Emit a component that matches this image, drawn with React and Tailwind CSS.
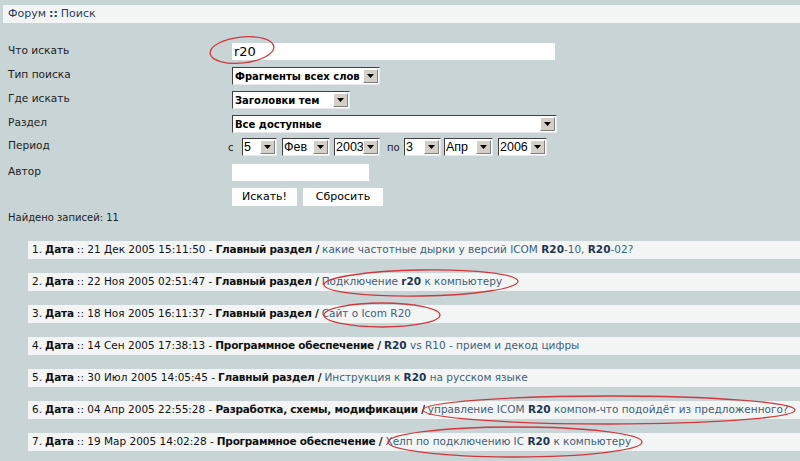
import React from "react";

const F = { fontFamily: '"DejaVu Sans", Verdana, sans-serif' };

function Select({ w, value, bold = true }) {
  return (
    <div
      className={`flex h-[18px] items-stretch bg-white border border-t-[#404040] border-l-[#404040] border-b-[#e8e8e8] border-r-[#e8e8e8] ${w}`}
    >
      <div
        className={`flex-1 flex items-center pl-[1px] text-black whitespace-nowrap overflow-hidden ${bold ? "text-[10px] font-bold pl-[2px]" : "text-[12.5px]"}`}
        style={bold ? F : { fontFamily: '"Liberation Sans", Arial, sans-serif' }}
      >
        {value}
      </div>
      <div className="w-[15px] my-[1px] mr-[1px] bg-[#d4d0c8] border border-t-white border-l-white border-b-[#808080] border-r-[#808080] flex items-center justify-center">
        <svg width="7" height="4" viewBox="0 0 7 4"><path d="M0 0H7L3.5 4Z" fill="#000" /></svg>
      </div>
    </div>
  );
}

function Label({ children }) {
  return <div className="w-[232px] pl-2 text-[10.6px] text-[#222]">{children}</div>;
}

const B = ({ children }) => <b className="text-[#1d3550]">{children}</b>;

const rows = [
  ["1", "21 Дек 2005 15:11:50", "Главный раздел", ["какие частотные дырки у версий ICOM ", <B key="a">R20</B>, "-10, ", <B key="b">R20</B>, "-02?"]],
  ["2", "22 Ноя 2005 02:51:47", "Главный раздел", ["Подключение ", <B key="a">r20</B>, " к компьютеру"]],
  ["3", "18 Ноя 2005 16:11:37", "Главный раздел", ["Сайт о Icom R20"]],
  ["4", "14 Сен 2005 17:38:13", "Программное обеспечение", [<B key="a">R20</B>, " vs R10 - прием и декод цифры"]],
  ["5", "30 Июл 2005 14:05:45", "Главный раздел", ["Инструкция к ", <B key="a">R20</B>, " на русском языке"]],
  ["6", "04 Апр 2005 22:55:28", "Разработка, схемы, модификации", ["управление ICOM ", <B key="a">R20</B>, " компом-что подойдёт из предложенного?"]],
  ["7", "19 Мар 2005 14:02:28", "Программное обеспечение", ["Хелп по подключению IC ", <B key="a">R20</B>, " к компьютеру"]],
];

export default function App() {
  return (
    <div className="relative w-[800px] h-[461px] overflow-hidden bg-[#c9d4d7]" style={F}>
      <div className="pt-[5px] pl-[3px]">
        <div className="h-[18px] bg-[#f3f5f5] flex items-center pl-[5px] text-[11px] text-[#1d3f63]">
          Форум <span className="mx-[3px] font-bold">::</span> Поиск
        </div>
      </div>

      <div className="mt-[20px] flex flex-col">
        <div className="flex h-[17px]">
          <Label>Что искать</Label>
          <div className="w-[323px] h-[17px] bg-white flex items-center pl-[2px] text-[13px] text-black" style={{ fontFamily: '"DejaVu Sans", sans-serif' }}>
            r20
          </div>
        </div>
        <div className="flex mt-[7px]">
          <Label>Тип поиска</Label>
          <Select w="w-[148px]" value="Фрагменты всех слов" />
        </div>
        <div className="flex mt-[6px]">
          <Label>Где искать</Label>
          <Select w="w-[118px]" value="Заголовки тем" />
        </div>
        <div className="flex mt-[6px]">
          <Label>Раздел</Label>
          <Select w="w-[325px]" value="Все доступные" />
        </div>
        <div className="flex mt-[5px]">
          <div className="w-[228px] pl-2 text-[10.6px] text-[#222]">Период</div>
          <div className="flex items-end text-[10px] text-[#222]">
            <span className="w-[14px] pb-[1px]">с</span>
            <Select w="w-[35px]" value="5" bold={false} />
            <div className="w-[5px]" />
            <Select w="w-[48px]" value="Фев" bold={false} />
            <div className="w-[4px]" />
            <Select w="w-[46px]" value="2003" bold={false} />
            <span className="ml-[7px] w-[17px] pb-[1px]">по</span>
            <Select w="w-[37px]" value="3" bold={false} />
            <div className="w-[3px]" />
            <Select w="w-[49px]" value="Апр" bold={false} />
            <div className="w-[5px]" />
            <Select w="w-[49px]" value="2006" bold={false} />
          </div>
        </div>
        <div className="flex mt-[8px]">
          <Label>Автор</Label>
          <div className="w-[137px] h-[17px] bg-white" />
        </div>
        <div className="flex mt-[7px]">
          <div className="w-[232px]" />
          <div className="flex gap-[6px]">
            <div className="w-[65px] h-[18px] bg-[#fdfdfd] flex items-center justify-center text-[11px] text-black">Искать!</div>
            <div className="w-[80px] h-[18px] bg-[#fdfdfd] flex items-center justify-center text-[11px] text-black">Сбросить</div>
          </div>
        </div>
        <div className="mt-[4px] pl-2 text-[10px] text-[#222] h-[14px] flex items-center">Найдено записей: 11</div>
      </div>

      <div className="mt-[17px] pl-[28px] flex flex-col gap-[14px]">
        {rows.map(([n, d, sec, title]) => (
          <div key={n} className="h-[18px] bg-[#f3f5f5] flex items-center pl-[4px] text-[10.5px] text-[#111] whitespace-nowrap">
            <span>{n}. </span>
            <b className="ml-[3px] tracking-[-0.2px]">Дата</b>
            <span className="ml-[3px]">:: {d} - </span>
            <b className="ml-[3px] tracking-[-0.25px]">{sec} /</b>
            <span className="ml-[3px] text-[#3e5f7c]">{title}</span>
          </div>
        ))}
      </div>

      <svg className="absolute inset-0 pointer-events-none" width="800" height="461">
        <g fill="none" stroke="#d0383c" strokeWidth="1.3">
          <ellipse cx="242" cy="50" rx="32" ry="13" transform="rotate(-6 242 50)" />
          <ellipse cx="421" cy="283" rx="97" ry="13" transform="rotate(-1 421 283)" />
          <ellipse cx="382" cy="315" rx="58" ry="12" />
          <ellipse cx="609" cy="410" rx="186" ry="14" />
          <ellipse cx="515" cy="442" rx="127" ry="15" />
        </g>
      </svg>
    </div>
  );
}
